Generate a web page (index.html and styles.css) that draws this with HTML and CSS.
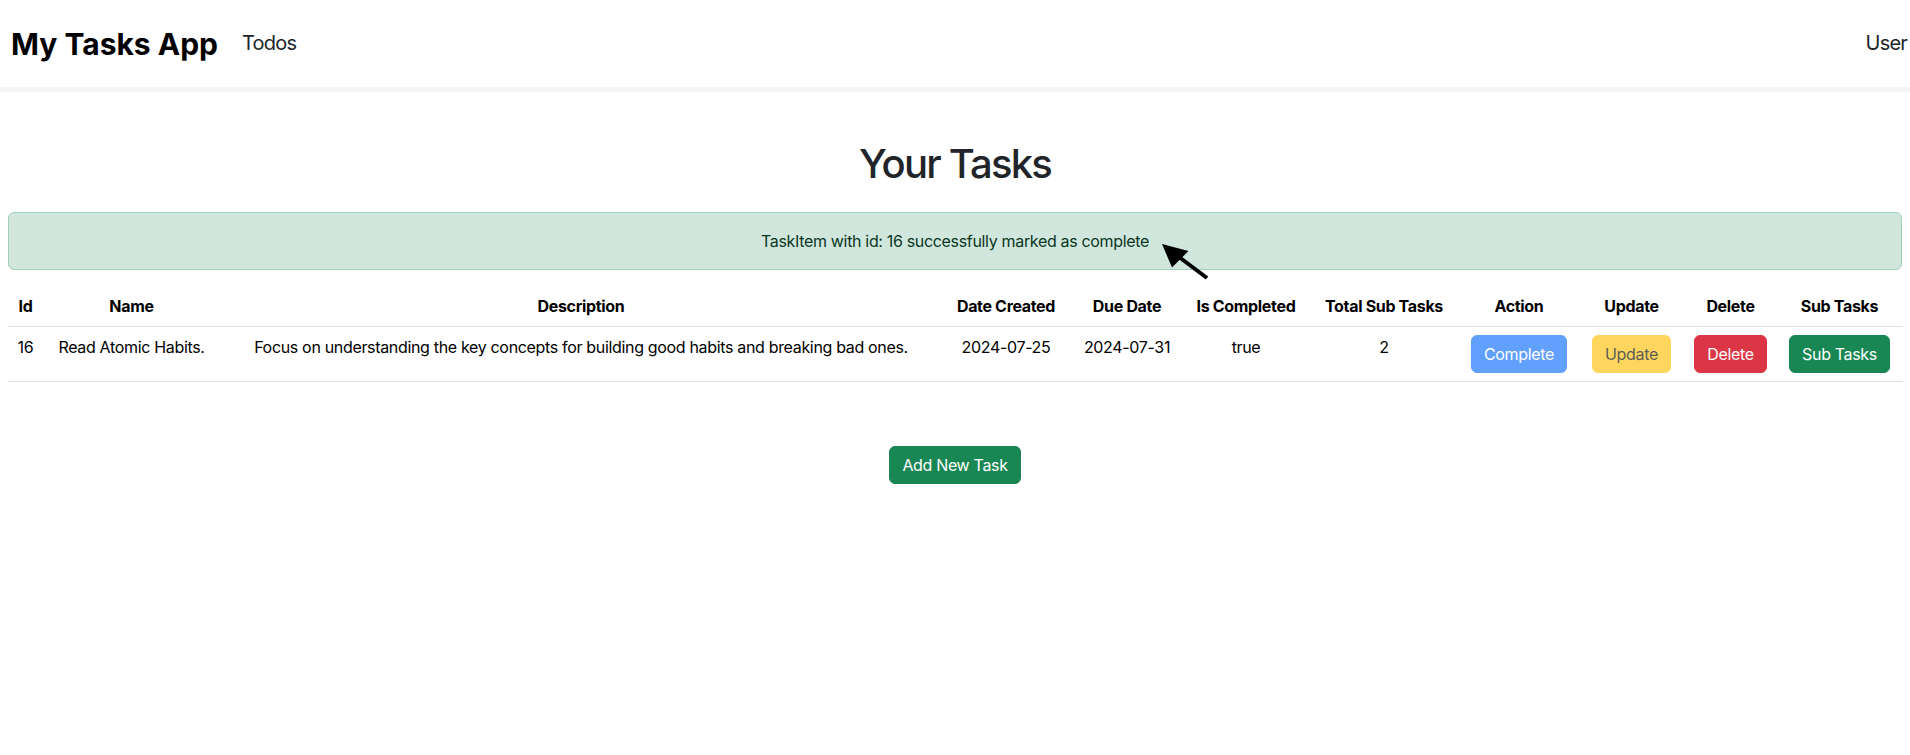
FILE: index.html
```html
<!DOCTYPE html>
<html lang="en">
<head>
<meta charset="utf-8">
<title>My Tasks App</title>
<link rel="stylesheet" href="styles.css">
</head>
<body>
<header class="navbar">
  <nav class="nav-left">
    <a class="brand" href="#">My Tasks App</a>
    <a class="nav-link" href="#">Todos</a>
  </nav>
  <a class="nav-link" href="#">User</a>
</header>
<main class="content">
  <h1 class="title">Your Tasks</h1>
  <div class="alert">
    TaskItem with id: 16 successfully marked as complete
    <svg class="pointer" width="60" height="46" viewBox="0 0 60 46" aria-hidden="true">
      <line x1="24" y1="19" x2="52" y2="40" stroke="#000" stroke-width="4" stroke-linecap="butt"/>
      <polygon points="7,6 33.5,13 17,29.5" fill="#000"/>
    </svg>
  </div>
  <table class="tasks">
    <colgroup>
      <col class="c-id"><col class="c-name"><col class="c-desc"><col class="c-created"><col class="c-due">
      <col class="c-done"><col class="c-subs"><col class="c-action"><col class="c-update"><col class="c-delete"><col class="c-subtasks">
    </colgroup>
    <thead>
      <tr>
        <th>Id</th><th>Name</th><th>Description</th><th>Date Created</th><th>Due Date</th>
        <th>Is Completed</th><th>Total Sub Tasks</th><th>Action</th><th>Update</th><th>Delete</th><th>Sub Tasks</th>
      </tr>
    </thead>
    <tbody>
      <tr>
        <td>16</td>
        <td>Read Atomic Habits.</td>
        <td>Focus on understanding the key concepts for building good habits and breaking bad ones.</td>
        <td>2024-07-25</td>
        <td>2024-07-31</td>
        <td>true</td>
        <td>2</td>
        <td><button class="btn btn-primary" disabled>Complete</button></td>
        <td><button class="btn btn-warning" disabled>Update</button></td>
        <td><button class="btn btn-danger">Delete</button></td>
        <td><button class="btn btn-success">Sub Tasks</button></td>
      </tr>
    </tbody>
  </table>
  <div class="actions">
    <button class="btn btn-success">Add New Task</button>
  </div>
</main>
</body>
</html>
```
FILE: styles.css
```css
* { box-sizing: border-box; }

body {
  margin: 0;
  font-family: Inter, "Noto Sans", "DejaVu Sans", sans-serif;
  font-size: 16px;
  line-height: 1.5;
  letter-spacing: -0.33px;
  color: #212529;
  background: #fff;
}

a { text-decoration: none; color: inherit; }

.navbar {
  height: 92px;
  display: flex;
  align-items: center;
  justify-content: space-between;
  padding: 0 3px 0 11px;
  border-bottom: 5px solid #f4f5f7;
}

.nav-left {
  display: flex;
  align-items: center;
  gap: 24px;
}

.brand {
  font-size: 30px;
  font-weight: 700;
  line-height: 36px;
  letter-spacing: 0;
  color: #000;
}

.nav-link {
  font-size: 20px;
  line-height: 30px;
  letter-spacing: -0.8px;
  color: #212529;
  margin-bottom: 2px;
}

.content {
  padding: 0 8px;
}

.title {
  margin: 48px 0 24px;
  font-size: 40px;
  line-height: 48px;
  font-weight: 500;
  letter-spacing: -1.8px;
  text-align: center;
  color: #212529;
}

.alert {
  position: relative;
  margin-bottom: 16px;
  padding: 16px;
  border: 1px solid #a3cfbb;
  border-radius: 6px;
  background: #d1e7dd;
  color: #0a3622;
  text-align: center;
}

.pointer {
  position: absolute;
  left: calc(50% + 200px);
  top: 25px;
}

.tasks {
  width: 100%;
  table-layout: fixed;
  border-collapse: collapse;
  margin-bottom: 16px;
  text-align: center;
  color: #000;
}

.tasks th,
.tasks td {
  padding: 8px;
  border-bottom: 1px solid #dee2e6;
  vertical-align: top;
  white-space: nowrap;
}

.tasks th { font-weight: 700; }

.c-id { width: 35px; }
.c-name { width: 177px; }
.c-desc { width: 722px; }
.c-created { width: 128px; }
.c-due { width: 114px; }
.c-done { width: 124px; }
.c-subs { width: 152px; }
.c-action { width: 118px; }
.c-update { width: 107px; }
.c-delete { width: 91px; }
.c-subtasks { width: 127px; }

.btn {
  display: inline-block;
  padding: 6px 12px;
  font-family: inherit;
  font-size: 16px;
  line-height: 24px;
  letter-spacing: -0.33px;
  border: 1px solid transparent;
  border-radius: 6px;
  cursor: pointer;
}

.btn:disabled { opacity: .65; cursor: default; }

.btn-primary { background: #0d6efd; border-color: #0d6efd; color: #fff; }
.btn-warning { background: #ffc107; border-color: #ffc107; color: #000; }
.btn-danger { background: #dc3545; border-color: #dc3545; color: #fff; }
.btn-success { background: #198754; border-color: #198754; color: #fff; }

.actions {
  margin-top: 64px;
  display: flex;
  justify-content: center;
}
```
